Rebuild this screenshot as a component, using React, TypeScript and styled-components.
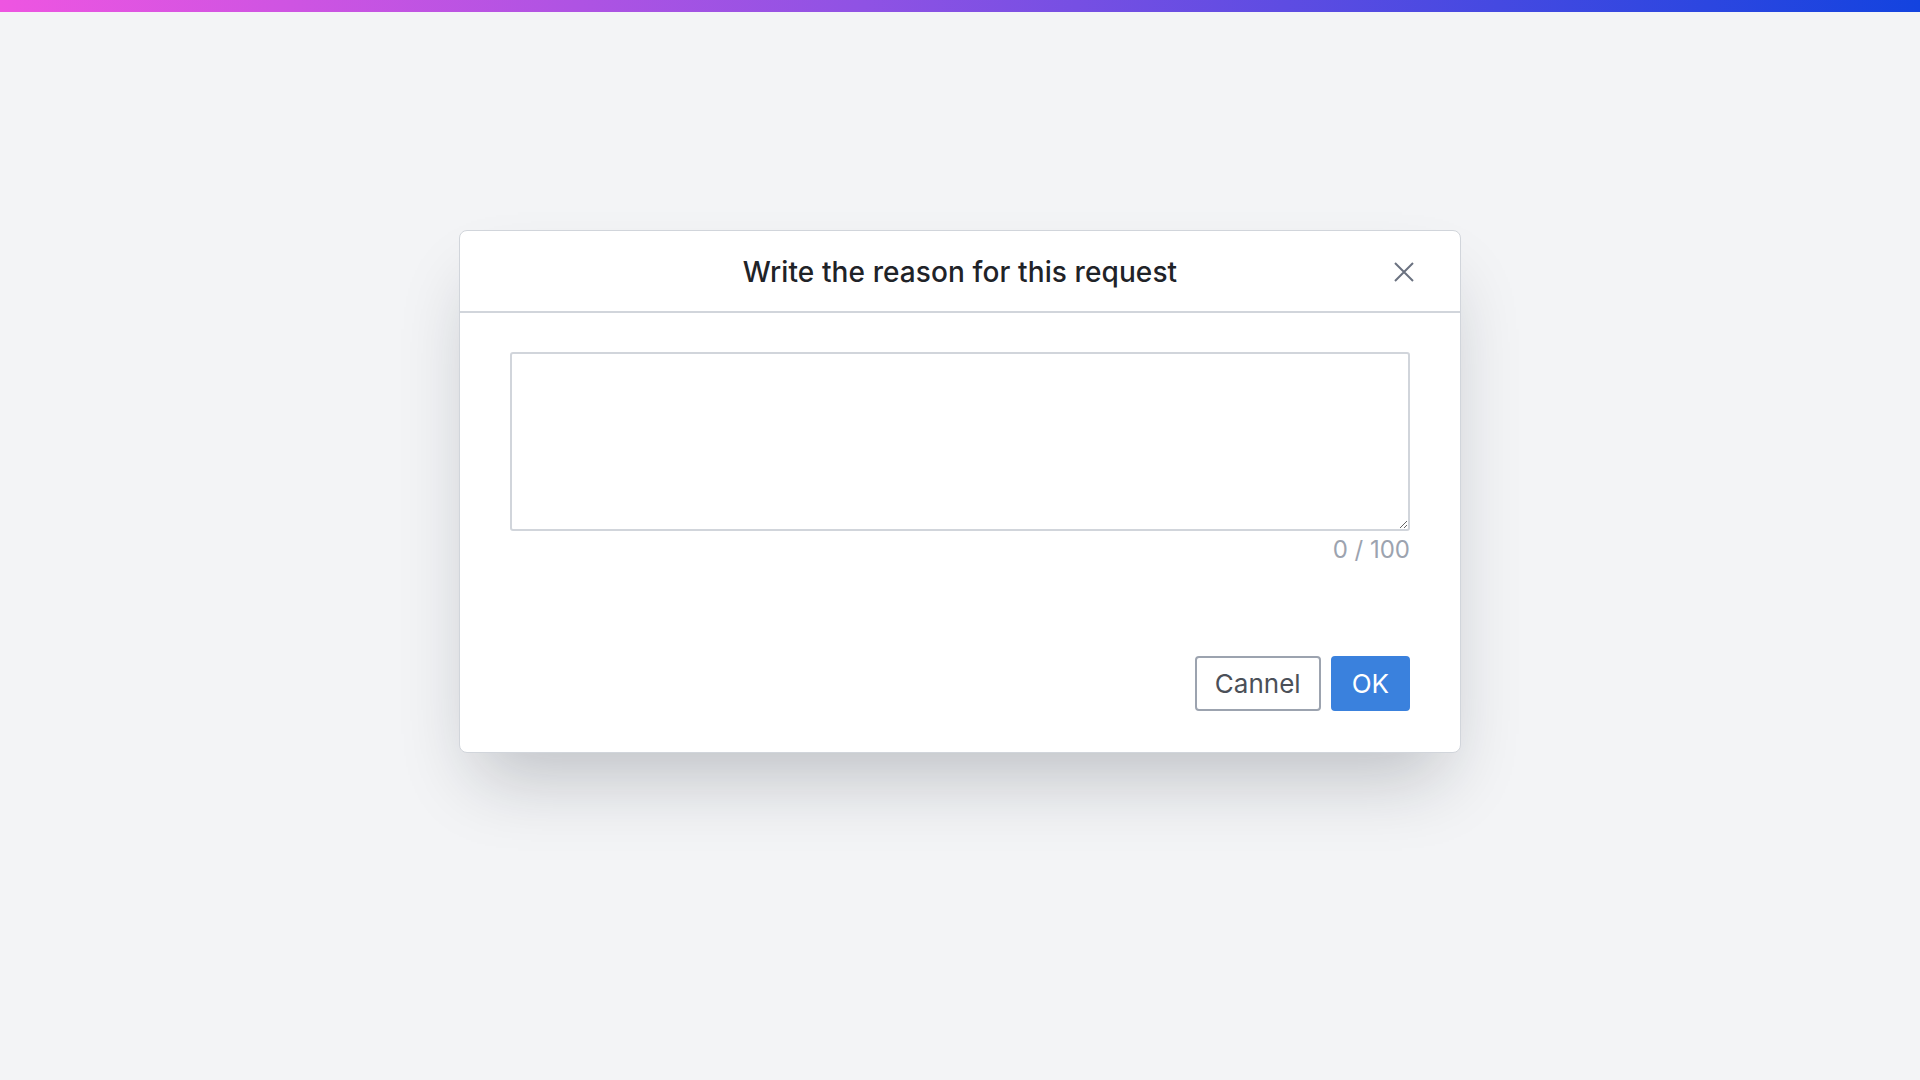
import React from "react";
import styled, { createGlobalStyle } from "styled-components";

const Global = createGlobalStyle`
  html, body { margin: 0; padding: 0; }
  body {
    background: #f3f4f6;
    font-family: Inter, "Noto Sans", "Liberation Sans", sans-serif;
    min-height: 1080px;
  }
  * { box-sizing: border-box; }
`;

const TopBar = styled.div`
  height: 12px;
  background: linear-gradient(90deg, #ee55e1 0%, #8f52e4 45%, #1343df 100%);
`;

const Stage = styled.main`
  display: flex;
  justify-content: center;
  padding-top: 218px;
`;

const Dialog = styled.section`
  width: 1002px;
  background: #ffffff;
  border: 1px solid #d1d5db;
  border-radius: 8px;
  box-shadow: 0 40px 70px -18px rgba(17, 24, 39, 0.24);
  display: flex;
  flex-direction: column;
`;

const Header = styled.header`
  position: relative;
  height: 82px;
  padding-top: 2px;
  display: flex;
  align-items: center;
  justify-content: center;
  border-bottom: 2px solid #d1d5db;
`;

const Title = styled.h2`
  margin: 0;
  font-size: 28px;
  font-weight: 500;
  color: #1f2328;
  letter-spacing: 0.1px;
`;

const CloseButton = styled.button`
  position: absolute;
  right: 42px;
  top: calc(50% + 1px);
  transform: translateY(-50%);
  width: 28px;
  height: 28px;
  padding: 0;
  border: none;
  background: transparent;
  display: flex;
  align-items: center;
  justify-content: center;
  cursor: pointer;
  color: #6b7280;
`;

const Body = styled.div`
  padding: 39px 50px 0;
  display: flex;
  flex-direction: column;
`;

const TextArea = styled.textarea`
  width: 900px;
  height: 179px;
  border: 2px solid #d1d5db;
  border-radius: 3px;
  resize: vertical;
  padding: 10px 12px;
  font-family: inherit;
  font-size: 20px;
  outline: none;
  display: block;
`;

const Counter = styled.div`
  align-self: flex-end;
  margin-top: 5px;
  font-size: 24px;
  color: #9ca3af;
  line-height: 28px;
`;

const Footer = styled.footer`
  display: flex;
  justify-content: flex-end;
  gap: 10px;
  padding: 92px 50px 41px;
`;

const Button = styled.button<{ $primary?: boolean }>`
  height: 55px;
  padding: 0 ${(p) => (p.$primary ? "19px" : "18px")};
  border-radius: 4px;
  font-family: inherit;
  font-size: 26px;
  font-weight: 400;
  cursor: pointer;
  border: 2px solid ${(p) => (p.$primary ? "#3a81dd" : "#9ca3af")};
  background: ${(p) => (p.$primary ? "#3a81dd" : "#ffffff")};
  color: ${(p) => (p.$primary ? "#ffffff" : "#4b5058")};
`;

export default function App() {
  return (
    <>
      <Global />
      <TopBar />
      <Stage>
        <Dialog>
          <Header>
            <Title>Write the reason for this request</Title>
            <CloseButton aria-label="Close">
              <svg width="20" height="20" viewBox="0 0 20 20" fill="none">
                <path d="M1 1L19 19M19 1L1 19" stroke="currentColor" strokeWidth="2" />
              </svg>
            </CloseButton>
          </Header>
          <Body>
            <TextArea maxLength={100} />
            <Counter>0 / 100</Counter>
          </Body>
          <Footer>
            <Button>Cannel</Button>
            <Button $primary>OK</Button>
          </Footer>
        </Dialog>
      </Stage>
    </>
  );
}
